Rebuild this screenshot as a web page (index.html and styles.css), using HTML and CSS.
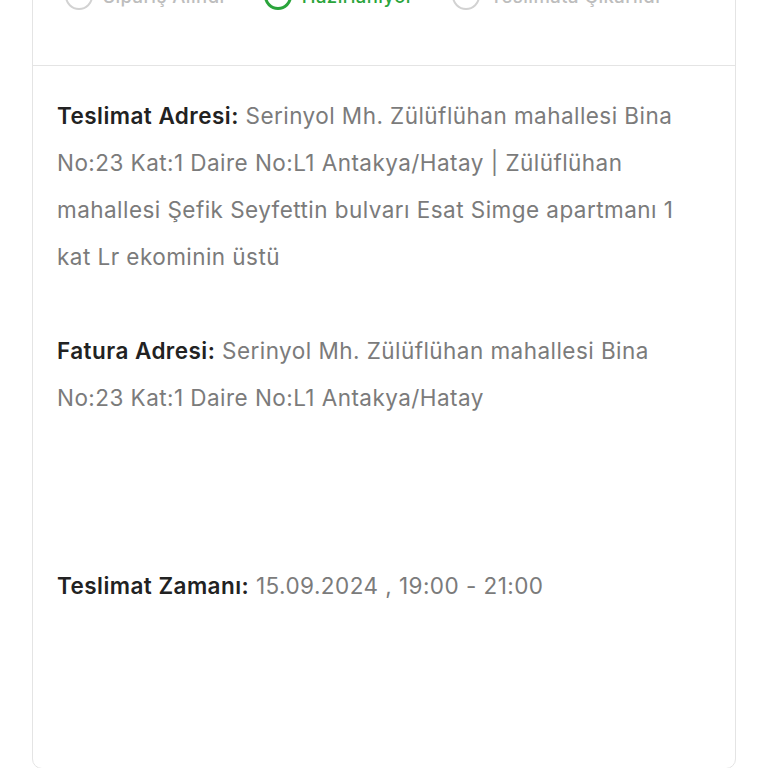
FILE: index.html
```html
<!DOCTYPE html>
<html lang="tr">
<head>
<meta charset="utf-8">
<title>Sipariş Detayı</title>
<link rel="stylesheet" href="styles.css">
</head>
<body>
<div class="card">
  <div class="steps-section">
    <div class="steps">
      <div class="step">
        <span class="circle"></span>
        <span class="step-label">Sipariş Alındı</span>
      </div>
      <div class="step active">
        <span class="circle"></span>
        <span class="step-label">Hazırlanıyor</span>
      </div>
      <div class="step">
        <span class="circle"></span>
        <span class="step-label">Teslimata Çıkarıldı</span>
      </div>
    </div>
  </div>
  <div class="info-section">
    <p class="row"><span class="key">Teslimat Adresi:</span> <span class="val">Serinyol Mh. Zülüflühan mahallesi Bina No:23 Kat:1 Daire No:L1 Antakya/Hatay | Zülüflühan mahallesi Şefik Seyfettin bulvarı Esat Simge apartmanı 1 kat Lr ekominin üstü</span></p>
    <p class="row row-billing"><span class="key">Fatura Adresi:</span> <span class="val">Serinyol Mh. Zülüflühan mahallesi Bina No:23 Kat:1 Daire No:L1 Antakya/Hatay</span></p>
    <p class="row row-time"><span class="key">Teslimat Zamanı:</span> <span class="val">15.09.2024 , 19:00 - 21:00</span></p>
  </div>
</div>
</body>
</html>
```
FILE: styles.css
```css
html, body {
  margin: 0;
  padding: 0;
  background: #ffffff;
  font-family: Inter, "Noto Sans", sans-serif;
}

.card {
  margin: -60px 32px 0 32px;
  border: 1px solid #e4e4e4;
  border-radius: 10px;
  background: #ffffff;
  height: 829px;
  box-sizing: border-box;
  display: flex;
  flex-direction: column;
}

.steps-section {
  padding: 41px 32px 55px 32px;
  border-bottom: 1px solid #e4e4e4;
}

.steps {
  display: flex;
  align-items: center;
  gap: 39px;
}

.step {
  display: flex;
  align-items: center;
  gap: 10px;
}

.circle {
  width: 28px;
  height: 28px;
  box-sizing: border-box;
  border: 2px solid #d2d2d2;
  border-radius: 50%;
}

.step-label {
  font-size: 18.5px;
  font-weight: 500;
  letter-spacing: 0.45px;
  color: #bdbdbd;
}

.step.active .circle {
  border: 3px solid #2aa43b;
}

.step.active .step-label {
  color: #2aa43b;
}

.info-section {
  padding: 26px 32px 0 24px;
}

.row {
  margin: 0;
  font-size: 22.5px;
  letter-spacing: 0.45px;
  line-height: 47px;
}

.row-billing {
  margin-top: 47px;
}

.row-time {
  margin-top: 141px;
}

.key {
  font-weight: 600;
  color: #222222;
}

.val {
  color: #7b7b7b;
}
```
